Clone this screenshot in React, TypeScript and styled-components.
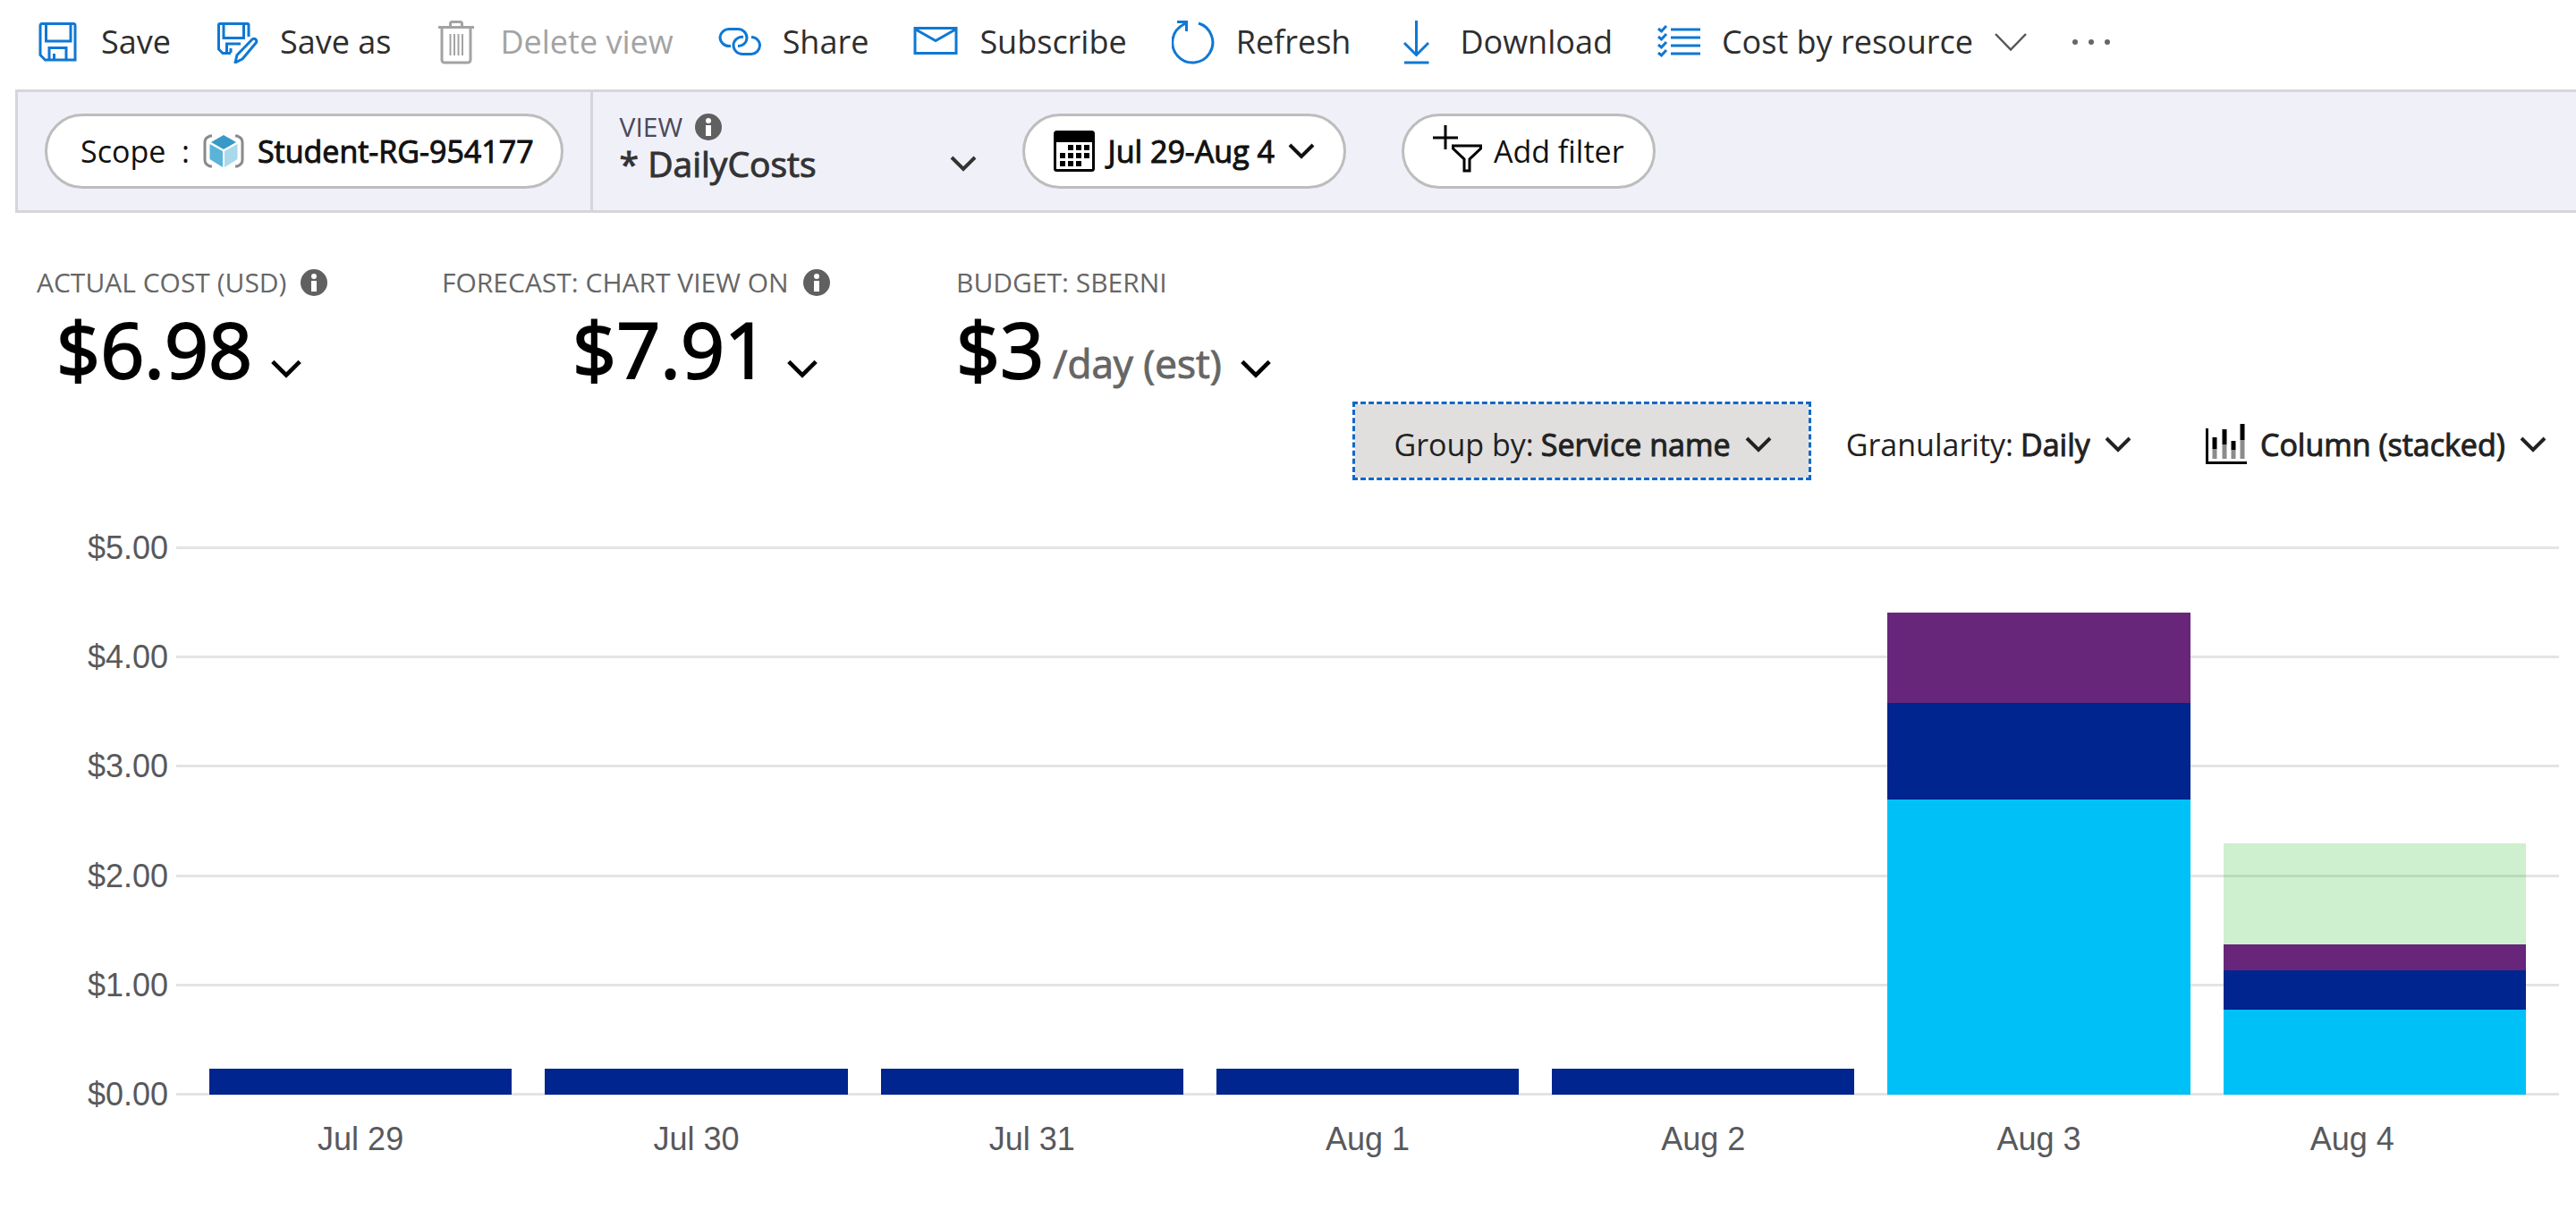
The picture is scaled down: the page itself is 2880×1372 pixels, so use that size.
import React from "react";
import styled, { createGlobalStyle } from "styled-components";

const GlobalStyle = createGlobalStyle`
  *, *::before, *::after { box-sizing: border-box; }
  body {
    margin: 0;
    background: #fff;
    color: #222;
    font-family: "Open Sans", "Noto Sans", sans-serif;
  }
  button, select { font: inherit; color: inherit; cursor: pointer; }
  svg { display: block; flex: none; }
`;

/* ---------- icons ---------- */

const BLUE = "#0f78d4";

const SaveIcon = () => (
  <svg width="48" height="48" viewBox="0 0 48 48" fill="none" stroke={BLUE} strokeWidth="3" aria-hidden="true">
    <path d="M6 3.500H41a2 2 0 0 1 2 2V44H9.500L4 38.500V5.500a2 2 0 0 1 2-2Z" />
    <path d="M10.500 4V23H38V4" />
    <path d="M14 44V30.500H33V44M19.500 44V37" />
  </svg>
);

const SaveAsIcon = () => (
  <svg width="48" height="48" viewBox="0 0 48 48" fill="none" stroke={BLUE} strokeWidth="3" aria-hidden="true">
    <path d="M37 18V5a1.500 1.500 0 0 0-1.500-1.500H5A1.500 1.500 0 0 0 3.500 5V32L8 36.500H17" />
    <path d="M9 4V19.500H31.500V4" />
    <path d="M12.500 36V26H28M17 36V31" />
    <path d="M41.500 20.500a3 3 0 0 1 4 4L30 43l-8 4 2-8.500Z" strokeLinejoin="round" />
  </svg>
);

const TrashIcon = () => (
  <svg width="48" height="50" viewBox="0 0 48 50" fill="none" stroke="#a3a3a3" strokeWidth="3" aria-hidden="true">
    <path d="M3 8.500H43M16.500 8V4.500A2 2 0 0 1 18.500 2.500H27.500a2 2 0 0 1 2 2V8" />
    <path d="M7 9V45a3 3 0 0 0 3 3H36a3 3 0 0 0 3-3V9" />
    <path d="M16.500 16V40M21 16V40M25.500 16V40M30 16V40" strokeWidth="2" />
  </svg>
);

const ShareIcon = () => (
  <svg width="48" height="48" viewBox="0 0 48 48" fill="none" stroke={BLUE} strokeWidth="3" aria-hidden="true">
    <path d="M14 28.500H12A10 10 0 0 1 2 18.500 10 10 0 0 1 12 9.500H22A10 10 0 0 1 32 19.500 9.500 9.500 0 0 1 22 28.500" />
    <path d="M28 18.500A9.500 9.500 0 0 0 17 28 10 10 0 0 0 27 37.500H37A10 10 0 0 0 46.500 28 9.500 9.500 0 0 0 37 18.500" />
  </svg>
);

const MailIcon = () => (
  <svg width="50" height="48" viewBox="0 0 50 48" fill="none" stroke={BLUE} strokeWidth="3" aria-hidden="true">
    <path d="M2 8.500H48V36.500H2ZM2 9.500L25 22.500 48 9.500" />
  </svg>
);

const RefreshIcon = () => (
  <svg width="48" height="50" viewBox="0 0 48 50" fill="none" stroke={BLUE} strokeWidth="3" aria-hidden="true">
    <path d="M30 4A22.500 22.500 0 1 1 13 5.500L16.500 3.500" />
    <path d="M6 2.500H16.500V13" />
  </svg>
);

const DownloadIcon = () => (
  <svg width="48" height="50" viewBox="0 0 48 50" fill="none" stroke={BLUE} strokeWidth="3" aria-hidden="true">
    <path d="M23.500 1V39M10 26L23.500 39.500 37 26M10 48H37.500" />
  </svg>
);

const ListIcon = () => (
  <svg width="48" height="48" viewBox="0 0 48 48" fill="none" stroke={BLUE} strokeWidth="3" aria-hidden="true">
    {[9, 18, 27, 36].map((y) => (
      <path key={y} d={`M15 ${y + 1}H48M1 ${y}L4.500 ${y + 3} 10 ${y - 3}`} />
    ))}
  </svg>
);

const ThinChevron = () => (
  <svg width="36" height="22" viewBox="0 0 36 22" fill="none" stroke="#555" strokeWidth="2.500" aria-hidden="true">
    <path d="M1 2L18 19.500 35 2" />
  </svg>
);

const DotsIcon = () => (
  <svg width="46" height="8" viewBox="0 0 46 8" fill="#666" aria-hidden="true">
    <circle cx="4" cy="4" r="3" />
    <circle cx="22" cy="4" r="3" />
    <circle cx="40" cy="4" r="3" />
  </svg>
);

const CubeIcon = () => (
  <svg width="46" height="38" viewBox="0 0 46 38" aria-hidden="true">
    <path d="M10 2H8Q2 4 2 9V29Q2 34 8 36H10M36 2H38Q44 4 44 9V29Q44 34 38 36H36" fill="none" stroke="#8a8a8a" strokeWidth="3" />
    <path d="M23 1L37 9 23 17 9 9Z" fill="#3999c6" />
    <path d="M7.500 11L22 19V37L7.500 28Z" fill="#59b4d9" />
    <path d="M38.500 11L24 19V37L38.500 28Z" fill="#a9d9ea" />
  </svg>
);

const CalendarIcon = () => (
  <svg width="46" height="46" viewBox="0 0 46 46" aria-hidden="true">
    <rect x="1.500" y="1.500" width="43" height="43" rx="2" fill="#fff" stroke="#000" strokeWidth="3" />
    <path d="M1 2H45V13H1Z" />
    <path
      d="M16 16h6v6h-6zM25 16h6v6h-6zM34 16h6v6h-6zM7 25h6v6h-6zM16 25h6v6h-6zM25 25h6v6h-6zM34 25h6v6h-6zM7 34h6v6h-6zM16 34h6v6h-6zM25 34h6v6h-6z"
    />
  </svg>
);

const AddFilterIcon = () => (
  <svg width="56" height="60" viewBox="0 0 56 60" fill="none" stroke="#000" strokeWidth="3" aria-hidden="true">
    <path d="M0 15H28M14 1V28" />
    <path d="M22.500 24H53.500V27L41 39V52H35V39L22.500 27Z" />
  </svg>
);

const ColumnChartIcon = () => (
  <svg width="46" height="46" viewBox="0 0 46 46" fill="none" aria-hidden="true">
    <path d="M1.500 5V43.500H46" stroke="#000" strokeWidth="3" />
    <path d="M10 28V39M21 23V39M31 29V39M41 18V39" stroke="#8c8c8c" strokeWidth="5" />
    <path d="M10 15V28M21 6V23M31 19V29M41 0V18" stroke="#000" strokeWidth="5" />
  </svg>
);

const InfoIcon = () => (
  <svg width="30" height="30" viewBox="0 0 30 30" aria-hidden="true">
    <circle cx="15" cy="15" r="15" fill="#606060" />
    <circle cx="15" cy="8" r="3" fill="#fff" />
    <path d="M12 13H18V25H12Z" fill="#fff" />
  </svg>
);

const ChevronSvg = styled.svg`
  pointer-events: none;
`;

const Chevron = ({ large }: { large?: boolean }) => (
  <ChevronSvg
    width={large ? 36 : 30}
    height={large ? 21 : 18}
    viewBox="0 0 30 18"
    fill="none"
    stroke="currentColor"
    strokeWidth="4"
    aria-hidden="true"
  >
    <path d="M2 2L15 15 28 2" />
  </ChevronSvg>
);

/* ---------- command bar ---------- */

const Toolbar = styled.div`
  display: flex;
  align-items: center;
  gap: 50px;
  height: 94px;
  padding-left: 41px;
  margin-bottom: 6px;
`;

const ToolButton = styled.button`
  display: flex;
  align-items: center;
  gap: 24px;
  padding: 0;
  border: 0;
  background: none;
  font-size: 36px;
  line-height: 48px;
  color: #2e2e2e;
  white-space: nowrap;

  &:disabled {
    color: #a3a3a3;
    cursor: default;
  }
`;

/* ---------- filter bar ---------- */

const FilterBar = styled.div`
  display: flex;
  height: 138px;
  margin-left: 17px;
  border: 3px solid #d5d6d9;
  border-right: 0;
  background: #f0f0f9;
`;

const ScopeCell = styled.div`
  display: flex;
  align-items: center;
  padding: 0 30px;
  border-right: 3px solid #d5d6d9;
`;

const Pill = styled.button<{ $gap: number }>`
  display: flex;
  align-items: center;
  gap: ${(p) => p.$gap}px;
  height: 84px;
  padding: 0 32px;
  border: 3px solid #bdbdbd;
  border-radius: 42px;
  background: #fff;
  font-size: 34px;
  line-height: 46px;
  color: #111;
  white-space: nowrap;
`;

const ScopePill = styled(Pill)`
  padding: 0 30px 0 37px;
`;

const Strong = styled.span`
  -webkit-text-stroke: 1px currentColor;
`;

const ViewCell = styled.div`
  width: 480px;
  padding: 25px 51px 0 30px;
  color: #333;
`;

const ViewLabel = styled.div`
  display: flex;
  align-items: center;
  gap: 14px;
  height: 28px;
  font-size: 30px;
  line-height: 28px;
  color: #4a4a58;
`;

const Filters = styled.div`
  display: flex;
  align-items: center;
  gap: 62px;
`;

/* The arrow shares the select's grid cell, at its right end. */
const SelectBox = styled.div`
  display: grid;
  align-items: center;

  > * { grid-area: 1 / 1; }
  > svg { justify-self: end; }
`;

const Select = styled.select<{ $size: number }>`
  appearance: none;
  height: 54px;
  margin: 0;
  padding: 0 46px 0 0;
  border: 0;
  outline: 0;
  background: none;
  font-size: ${(p) => p.$size}px;
  line-height: 54px;
  -webkit-text-stroke: 1px currentColor;
`;

/* ---------- totals ---------- */

const Totals = styled.div`
  display: grid;
  grid-template-columns: 453px 575px 1fr;
  padding: 58px 0 0 41px;
`;

const TotalLabel = styled.div`
  display: flex;
  align-items: center;
  gap: 16px;
  margin-bottom: 4px;
  font-size: 30px;
  line-height: 40px;
  color: #666;
  white-space: nowrap;
`;

const TotalValue = styled.button<{ $indent: number }>`
  display: flex;
  align-items: baseline;
  gap: 20px;
  height: 100px;
  padding: 0 0 0 ${(p) => p.$indent}px;
  border: 0;
  background: none;
  font-size: 86px;
  line-height: 100px;
  color: #000;
`;

const Amount = styled.span`
  -webkit-text-stroke: 2px currentColor;
`;

const Period = styled.span`
  margin-left: -10px;
  font-size: 44px;
  line-height: 60px;
  color: #666;
  -webkit-text-stroke: 1px currentColor;
`;

/* ---------- chart controls ---------- */

const Controls = styled.div`
  display: flex;
  justify-content: flex-end;
  height: 88px;
  margin-top: 9px;
`;

const Control = styled.label<{ $active?: boolean; $gap?: number }>`
  display: flex;
  align-items: center;
  gap: ${(p) => p.$gap ?? 8}px;
  padding: 8px 41px 0 ${(p) => (p.$active ? 43 : 36)}px;
  border: 3px dashed ${(p) => (p.$active ? "#1168c8" : "transparent")};
  background: ${(p) => (p.$active ? "#e0dfde" : "none")};
  background-clip: padding-box;
  font-size: 34px;
  line-height: 46px;
  white-space: nowrap;

  &:last-child { padding-right: 30px; }
`;

/* ---------- chart ---------- */

const Chart = styled.figure`
  display: grid;
  grid-template-columns: 188px 1fr;
  column-gap: 9px;
  margin: 54px 19px 0 0;
  font-family: "Liberation Sans", Arial, sans-serif;
  font-size: 36px;
  line-height: 43px;
  color: #58595c;
`;

const YAxis = styled.div`
  display: flex;
  flex-direction: column;
  justify-content: space-between;
  text-align: right;
`;

const Plot = styled.div`
  display: grid;
  height: 614px;
  margin: 20px 0;

  > * { grid-area: 1 / 1; }
`;

const GridLines = styled.div`
  display: flex;
  flex-direction: column;
  justify-content: space-between;
`;

const GridLine = styled.div`
  height: 3px;
  background: #e4e4e4;
`;

const Columns = styled.div`
  display: flex;
  align-items: flex-end;
  gap: 37px;
  height: 613px;
  padding: 0 37px;
`;

const Column = styled.div`
  flex: 1;
`;

const Segment = styled.div``;

const XAxis = styled.div`
  grid-column: 2;
  display: grid;
  grid-template-columns: repeat(7, 1fr);
  gap: 37px;
  margin-top: 7px;
  padding: 0 37px;
  text-align: center;
`;

const XLabel = styled.div`
  /* the final day is labelled inward from the chart's edge */
  &:last-child { padding-right: 50px; }
`;

const CYAN = "#00c0f8";
const NAVY = "#00258f";
const PURPLE = "#67267a";
const FORECAST = "rgba(16, 180, 8, 0.2)";

const PX_PER_DOLLAR = 122;

type Part = { color: string; cost: number };

const days: { label: string; parts: Part[] }[] = [
  { label: "Jul 29", parts: [{ color: NAVY, cost: 0.24 }] },
  { label: "Jul 30", parts: [{ color: NAVY, cost: 0.24 }] },
  { label: "Jul 31", parts: [{ color: NAVY, cost: 0.24 }] },
  { label: "Aug 1", parts: [{ color: NAVY, cost: 0.24 }] },
  { label: "Aug 2", parts: [{ color: NAVY, cost: 0.24 }] },
  {
    label: "Aug 3",
    parts: [
      { color: PURPLE, cost: 0.83 },
      { color: NAVY, cost: 0.885 },
      { color: CYAN, cost: 2.705 },
    ],
  },
  {
    label: "Aug 4",
    parts: [
      { color: FORECAST, cost: 0.93 },
      { color: PURPLE, cost: 0.24 },
      { color: NAVY, cost: 0.36 },
      { color: CYAN, cost: 0.775 },
    ],
  },
];

const ticks = ["$5.00", "$4.00", "$3.00", "$2.00", "$1.00", "$0.00"];

export default function App() {
  return (
    <>
      <GlobalStyle />
      <Toolbar role="toolbar">
        <ToolButton><SaveIcon />Save</ToolButton>
        <ToolButton><SaveAsIcon />Save as</ToolButton>
        <ToolButton disabled><TrashIcon />Delete view</ToolButton>
        <ToolButton><ShareIcon />Share</ToolButton>
        <ToolButton><MailIcon />Subscribe</ToolButton>
        <ToolButton><RefreshIcon />Refresh</ToolButton>
        <ToolButton><DownloadIcon />Download</ToolButton>
        <ToolButton><ListIcon />Cost by resource<ThinChevron /></ToolButton>
        <ToolButton aria-label="More"><DotsIcon /></ToolButton>
      </Toolbar>

      <FilterBar>
        <ScopeCell>
          <ScopePill $gap={15}>
            <span>Scope&nbsp; :</span>
            <CubeIcon />
            <Strong>Student-RG-954177</Strong>
          </ScopePill>
        </ScopeCell>
        <ViewCell>
          <ViewLabel>
            <label htmlFor="view">VIEW</label>
            <InfoIcon />
          </ViewLabel>
          <SelectBox>
            <Select id="view" $size={39}>
              <option>* DailyCosts</option>
            </Select>
            <Chevron />
          </SelectBox>
        </ViewCell>
        <Filters>
          <Pill $gap={15}>
            <CalendarIcon />
            <Strong>Jul 29-Aug 4</Strong>
            <Chevron />
          </Pill>
          <Pill $gap={12}>
            <AddFilterIcon />
            Add filter
          </Pill>
        </Filters>
      </FilterBar>

      <Totals>
        <div>
          <TotalLabel>ACTUAL COST (USD)<InfoIcon /></TotalLabel>
          <TotalValue $indent={22}><Amount>$6.98</Amount><Chevron large /></TotalValue>
        </div>
        <div>
          <TotalLabel>FORECAST: CHART VIEW ON<InfoIcon /></TotalLabel>
          <TotalValue $indent={146}><Amount>$7.91</Amount><Chevron large /></TotalValue>
        </div>
        <div>
          <TotalLabel>BUDGET: SBERNI</TotalLabel>
          <TotalValue $indent={0}>
            <Amount>$3</Amount>
            <Period>/day (est)</Period>
            <Chevron large />
          </TotalValue>
        </div>
      </Totals>

      <Controls>
        <Control $active>
          Group by:
          <SelectBox>
            <Select $size={34}><option>Service name</option></Select>
            <Chevron />
          </SelectBox>
        </Control>
        <Control>
          Granularity:
          <SelectBox>
            <Select $size={34}><option>Daily</option></Select>
            <Chevron />
          </SelectBox>
        </Control>
        <Control $gap={15}>
          <ColumnChartIcon />
          <SelectBox>
            <Select $size={34} aria-label="Chart type"><option>Column (stacked)</option></Select>
            <Chevron />
          </SelectBox>
        </Control>
      </Controls>

      <Chart>
        <YAxis>
          {ticks.map((t) => <span key={t}>{t}</span>)}
        </YAxis>
        <Plot>
          <GridLines>
            {ticks.map((t) => <GridLine key={t} />)}
          </GridLines>
          <Columns>
            {days.map((d) => (
              <Column key={d.label}>
                {d.parts.map((p) => (
                  <Segment
                    key={p.color}
                    style={{ height: Math.round(p.cost * PX_PER_DOLLAR), background: p.color }}
                  />
                ))}
              </Column>
            ))}
          </Columns>
        </Plot>
        <XAxis>
          {days.map((d) => <XLabel key={d.label}>{d.label}</XLabel>)}
        </XAxis>
      </Chart>
    </>
  );
}
